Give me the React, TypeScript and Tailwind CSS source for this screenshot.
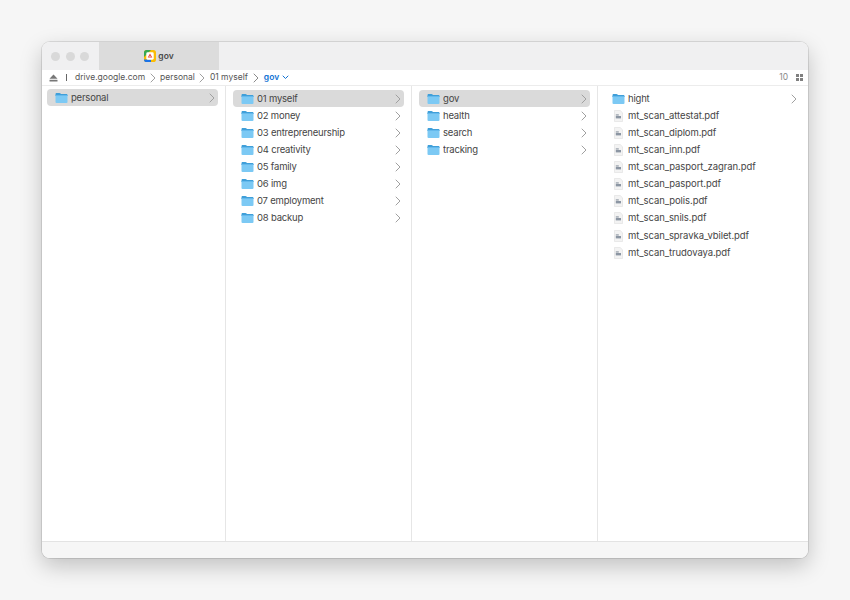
const FONT = "font-['Inter','Liberation_Sans',sans-serif]";

function Folder() {
  return (
    <svg width="13" height="12" viewBox="0 0 13 12" className="shrink-0">
      <path d="M0.5 2.2C0.5 1.4 1 1 1.7 1H4.4C4.9 1 5.2 1.2 5.5 1.5L6.1 2.1H11.4C12.1 2.1 12.5 2.6 12.5 3.2V4H0.5Z" fill="#3f9fd9" />
      <rect x="0.5" y="3" width="12" height="8" rx="1" fill="#7cc9f4" />
      <rect x="0.5" y="3" width="12" height="0.8" fill="#5fb6ea" />
    </svg>
  );
}

function Pdf() {
  return (
    <svg width="13" height="12" viewBox="0 0 13 12" className="shrink-0">
      <path d="M2.5 0.5H8.2L10.5 2.8V11.5H2.5Z" fill="#f3f3f3" stroke="#dedede" strokeWidth="0.6" />
      <rect x="3.8" y="4.4" width="3" height="1.1" fill="#8a93a0" />
      <rect x="3.8" y="6" width="5.2" height="2.4" fill="#8c96a3" />
    </svg>
  );
}

function Chevron({ color = "#a0a0a0" }: { color?: string }) {
  return (
    <svg width="6" height="10" viewBox="0 0 6 10" className="shrink-0">
      <path d="M1 1L5 5L1 9" fill="none" stroke={color} strokeWidth="1" strokeLinecap="round" strokeLinejoin="round" />
    </svg>
  );
}

function Drive() {
  return (
    <svg width="12" height="12" viewBox="0 0 12 12" className="shrink-0">
      <rect width="12" height="12" rx="2.6" fill="#fbbc04" />
      <path d="M0 2.6A2.6 2.6 0 0 1 2.6 0H7L0 7Z" fill="#34a853" />
      <path d="M0 6V9.4A2.6 2.6 0 0 0 2.6 12H7V9.5H0Z" fill="#1a73e8" />
      <rect x="2.3" y="2.3" width="7.4" height="7.4" rx="1.4" fill="#fff" />
      <path d="M6 3.4L8.3 7.6H3.7Z" fill="#ea4335" />
      <path d="M5.1 6.8H6.9L6 5.4Z" fill="#fff" />
    </svg>
  );
}

function Row({ name, kind, chevron, selected }: { name: string; kind: "folder" | "pdf"; chevron?: boolean; selected?: boolean }) {
  return (
    <div className={`flex h-[17.14px] items-center rounded-[4px] pl-[8px] pr-[3px] ${selected ? "bg-[#dadada]" : ""}`}>
      {kind === "folder" ? <Folder /> : <Pdf />}
      <span className={`ml-[3px] flex-1 truncate text-[9.5px] leading-[14px] text-[#454545] ${kind === "pdf" ? "tracking-[-0.08px]" : "tracking-[-0.2px]"}`}>{name}</span>
      {chevron && <Chevron />}
    </div>
  );
}

const col2 = ["01 myself", "02 money", "03 entrepreneurship", "04 creativity", "05 family", "06 img", "07 employment", "08 backup"];
const col3 = ["gov", "health", "search", "tracking"];
const col4 = ["attestat", "diplom", "inn", "pasport_zagran", "pasport", "polis", "snils", "spravka_vbilet", "trudovaya"];

function Crumb({ children }: { children: string }) {
  return <span className="text-[8.5px] leading-none text-[#555555]">{children}</span>;
}

export default function App() {
  return (
    <div className={`flex h-[600px] w-[850px] items-start bg-[#f6f6f6] pl-[42px] pt-[42px] ${FONT}`}>
      <div className="flex h-[516px] w-[766px] flex-col overflow-hidden rounded-[8px] bg-white shadow-[0_0_0_1px_rgba(0,0,0,0.1),0_8px_22px_rgba(0,0,0,0.22)]">
        <div className="flex h-[28px] shrink-0 bg-[#f0f0f1]">
          <div className="flex w-[57px] items-center gap-[5.5px] pl-[9px]">
            <span className="h-[9px] w-[9px] rounded-full bg-[#d9d9d9]" />
            <span className="h-[9px] w-[9px] rounded-full bg-[#d9d9d9]" />
            <span className="h-[9px] w-[9px] rounded-full bg-[#d9d9d9]" />
          </div>
          <div className="flex w-[120px] items-center justify-center gap-[2px] bg-[#dcdcdc]">
            <Drive />
            <span className="text-[8.5px] font-semibold leading-none text-[#4a4a4a]">gov</span>
          </div>
        </div>
        <div className="flex h-[16px] shrink-0 items-center border-b border-[#ececec] pl-[7px] pr-[5px]">
          <svg width="9" height="8" viewBox="0 0 9 8" className="shrink-0">
            <path d="M4.5 0.5L8.5 4.8H0.5Z" fill="#777777" />
            <rect x="0.5" y="5.8" width="8" height="1.7" fill="#777777" />
          </svg>
          <span className="ml-[8px] mr-[8px] h-[7px] w-px bg-[#666]" />
          <Crumb>drive.google.com</Crumb>
          <span className="mx-[4.5px]"><Chevron /></span>
          <Crumb>personal</Crumb>
          <span className="mx-[4.5px]"><Chevron /></span>
          <Crumb>01 myself</Crumb>
          <span className="ml-[5px] mr-[5px]"><Chevron color="#8a8a8a" /></span>
          <span className="text-[8.5px] font-semibold leading-none text-[#1273d4]">gov</span>
          <svg width="7" height="5" viewBox="0 0 7 5" className="ml-[3px] shrink-0">
            <path d="M1 1L3.5 3.5L6 1" fill="none" stroke="#1273d4" strokeWidth="1" strokeLinecap="round" strokeLinejoin="round" />
          </svg>
          <span className="ml-auto text-[8.5px] leading-none text-[#8a8a8a]">10</span>
          <span className="ml-[8px] grid grid-cols-2 gap-[1px]">
            <span className="h-[3px] w-[3px] bg-[#808080]" />
            <span className="h-[3px] w-[3px] bg-[#808080]" />
            <span className="h-[3px] w-[3px] bg-[#808080]" />
            <span className="h-[3px] w-[3px] bg-[#808080]" />
          </span>
        </div>
        <div className="flex flex-1">
          <div className="w-[184px] border-r border-[#e6e6e6] pl-[5px] pr-[7px] pt-[3px]">
            <Row name="personal" kind="folder" chevron selected />
          </div>
          <div className="w-[186px] border-r border-[#e6e6e6] pl-[7px] pr-[7px] pt-[4px]">
            {col2.map((n, i) => <Row key={n} name={n} kind="folder" chevron selected={i === 0} />)}
          </div>
          <div className="w-[186px] border-r border-[#e6e6e6] pl-[7px] pr-[7px] pt-[4px]">
            {col3.map((n, i) => <Row key={n} name={n} kind="folder" chevron selected={i === 0} />)}
          </div>
          <div className="flex-1 pl-[6px] pr-[8px] pt-[4px]">
            <Row name="hight" kind="folder" chevron />
            {col4.map((n) => <Row key={n} name={`mt_scan_${n}.pdf`} kind="pdf" />)}
          </div>
        </div>
        <div className="h-[17px] shrink-0 border-t border-[#e3e3e3] bg-[#f6f6f6]" />
      </div>
    </div>
  );
}
